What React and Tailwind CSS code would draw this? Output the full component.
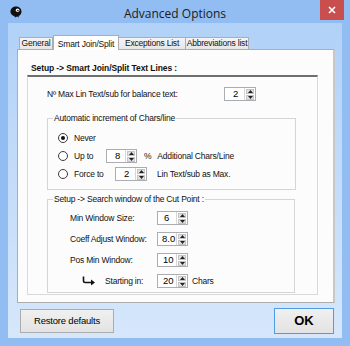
import React from "react";

function Spin({ value, w = "w-[31px]", pad = "pl-[6px]" }) {
  return (
    <div className={`flex h-[14px] border border-[#abadb3] bg-white ${w}`}>
      <div className={`flex flex-1 items-center ${pad} text-[9.5px] tracking-normal text-black`}>{value}</div>
      <div className="flex w-[11px] flex-col gap-px border-l border-[#d6d6d6] bg-white p-px">
        <div className="flex flex-1 items-center justify-center bg-[#e4e4e4] border border-[#c4c4c4]">
          <svg width="5" height="3" viewBox="0 0 5 3">
            <path d="M0 3 L2.5 0 L5 3 Z" fill="#222" />
          </svg>
        </div>
        <div className="flex flex-1 items-center justify-center bg-[#e4e4e4] border border-[#c4c4c4]">
          <svg width="5" height="3" viewBox="0 0 5 3">
            <path d="M0 0 L2.5 3 L5 0 Z" fill="#222" />
          </svg>
        </div>
      </div>
    </div>
  );
}

function Radio({ on }) {
  return (
    <div className="flex h-[10px] w-[10px] items-center justify-center rounded-full border border-[#3c3c3c] bg-white">
      {on && <div className="h-[4px] w-[4px] rounded-full bg-[#111]" />}
    </div>
  );
}

function Tab({ label, active, w }) {
  if (active) {
    return (
      <div
        className={`relative z-10 -mb-px flex h-[15px] ${w} items-start justify-center border border-b-0 border-[#adadad] bg-white pt-[2px]`}
      >
        {label}
      </div>
    );
  }
  return (
    <div
      className={`flex h-[12px] ${w} items-center justify-center border border-b-0 border-[#adadad] bg-gradient-to-b from-[#f4f4f4] to-[#e6e6e6] -ml-px`}
    >
      {label}
    </div>
  );
}

export default function App() {
  return (
    <div
      className="flex h-[346px] w-[350px] flex-col bg-[#92bdf2] text-[8.5px] tracking-[-0.2px] text-[#111] overflow-hidden"
      style={{ fontFamily: "'Liberation Sans', Arial, sans-serif" }}
    >
      {/* Title bar */}
      <div className="flex h-[23px] shrink-0 items-start">
        <div className="flex w-[44px] items-center pl-[10px] pt-[6px]">
          <svg width="12" height="12" viewBox="0 0 12 12">
            <path d="M6 0.5 C9 0.5 11.5 2.5 11.5 5.5 C11.5 8 10 9.5 8.5 10 L9 11.5 L7 10.5 L5 11.5 L4.5 10.2 C2 9.5 0.5 7.8 0.5 5.5 C0.5 2.5 3 0.5 6 0.5 Z" fill="#111" />
            <circle cx="7.6" cy="4.3" r="1.8" fill="#fff" />
            <circle cx="7.9" cy="4.5" r="0.8" fill="#111" />
            <path d="M0 6 L3 5 L3 7 Z" fill="#111" />
          </svg>
        </div>
        <div className="flex-1 pt-[5px] text-center text-[12px] tracking-normal text-[#1b1b1b]" style={{ fontFamily: "'Open Sans', 'Liberation Sans', sans-serif" }}>
          Advanced Options
        </div>
        <div className="flex w-[44px] justify-end pr-[6px]">
          <div className="flex h-[20px] w-[24px] items-center justify-center bg-[#c94f4f]">
            <svg width="8" height="8" viewBox="0 0 8 8">
              <path d="M1 1 L7 7 M7 1 L1 7" stroke="#fff" strokeWidth="1.6" />
            </svg>
          </div>
        </div>
      </div>

      {/* Client area */}
      <div className="mx-[8px] flex h-[315px] shrink-0 flex-col bg-gradient-to-b from-[#b1d1f7] to-[#d6e7fb]">
        {/* Tabs */}
        <div className="ml-[12px] mt-[11px] flex h-[15px] items-end">
          <Tab label="General" w="w-[34px]" />
          <Tab label="Smart Join/Split" w="w-[66px]" active />
          <Tab label="Exceptions List" w="w-[68px]" />
          <Tab label="Abbreviations list" w="w-[64px]" />
        </div>

        {/* Tab page */}
        <div className="ml-[9px] flex h-[254px] w-[318px] flex-col border border-[#adadad] border-r-2 border-r-[#c8c8c8] bg-[#fcfcfc]">
          <div className="ml-[13px] mt-[13px] h-[11px] font-bold leading-[11px] tracking-[-0.1px]">
            Setup -&gt; Smart Join/Split Text Lines :
          </div>

          <div className="ml-[9px] mt-[1px] flex h-[220px] w-[291px] flex-col border-t-2 border-t-[#6e6e6e] border-x border-b border-[#d9d9d9]">
            {/* Max lines */}
            <div className="ml-[19px] mt-[10px] flex h-[14px] items-center">
              <div className="w-[177px]">Nº Max Lin Text/sub for balance text:</div>
              <Spin value="2" w="w-[32px]" pad="pl-[8px]" />
            </div>

            {/* Group 1 */}
            <fieldset className="ml-[19px] mt-[12px] h-[77px] w-[249px] border border-[#d5d5d5] px-[10px]">
              <legend className="ml-[-5px] px-[1px] leading-[11px]">Automatic increment of Chars/line</legend>
              <div className="mt-[7px] flex flex-col gap-[4px]">
                <div className="flex h-[14px] items-center">
                  <Radio on />
                  <span className="ml-[6px]">Never</span>
                </div>
                <div className="flex h-[14px] items-center">
                  <div className="flex w-[48px] items-center">
                    <Radio />
                    <span className="ml-[6px]">Up to</span>
                  </div>
                  <Spin value="8" w="w-[31px]" pad="pl-[8px]" />
                  <span className="ml-[7px]">%</span>
                  <span className="ml-[6px]">Additional Chars/Line</span>
                </div>
                <div className="flex h-[14px] items-center">
                  <div className="flex w-[57px] items-center">
                    <Radio />
                    <span className="ml-[6px]">Force to</span>
                  </div>
                  <Spin value="2" w="w-[32px]" pad="pl-[8px]" />
                  <span className="ml-[10px]">Lin Text/sub as Max.</span>
                </div>
              </div>
            </fieldset>

            {/* Group 2 */}
            <fieldset className="ml-[19px] mt-[4px] h-[99px] w-[248px] border border-[#d5d5d5] pl-[22px]">
              <legend className="ml-[-17px] px-[1px] leading-[11px]">Setup -&gt; Search window of the Cut Point :</legend>
              <div className="mt-[6px] flex flex-col gap-[7px]">
                <div className="flex h-[14px] items-center">
                  <div className="w-[87px]">Min Window Size:</div>
                  <Spin value="6" w="w-[31px]" />
                </div>
                <div className="flex h-[14px] items-center">
                  <div className="w-[87px]">Coeff Adjust Window:</div>
                  <Spin value="8.0" w="w-[31px]" pad="pl-[4px]" />
                </div>
                <div className="flex h-[14px] items-center">
                  <div className="w-[87px]">Pos Min Window:</div>
                  <Spin value="10" w="w-[31px]" pad="pl-[5px]" />
                </div>
                <div className="flex h-[14px] items-center">
                  <div className="flex w-[87px] items-center">
                    <svg width="14" height="10" viewBox="0 0 14 10" className="ml-[12px]">
                      <path d="M1.5 0.5 V5 Q1.5 6.5 3 6.5 H10" stroke="#111" strokeWidth="1.6" fill="none" />
                      <path d="M9 3.5 L13 6.5 L9 9.5 Z" fill="#111" />
                    </svg>
                    <span className="ml-[9px]">Starting in:</span>
                  </div>
                  <Spin value="20" w="w-[31px]" pad="pl-[5px]" />
                  <span className="ml-[4px]">Chars</span>
                </div>
              </div>
            </fieldset>
          </div>
        </div>

        {/* Buttons */}
        <div className="mt-[5px] flex items-start justify-between pl-[12px] pr-[8px]">
          <button className="mt-[1px] flex h-[24px] w-[94px] items-center justify-center border border-[#acacac] bg-gradient-to-b from-[#f0f0f0] to-[#e3e3e3] text-[9.5px] text-black">
            Restore defaults
          </button>
          <button className="flex h-[26px] w-[60px] items-center justify-center border border-[#4f9be6] bg-gradient-to-b from-[#f0f0f0] to-[#e3e3e3] text-[13px] font-bold tracking-normal text-black">
            OK
          </button>
        </div>
      </div>
    </div>
  );
}
